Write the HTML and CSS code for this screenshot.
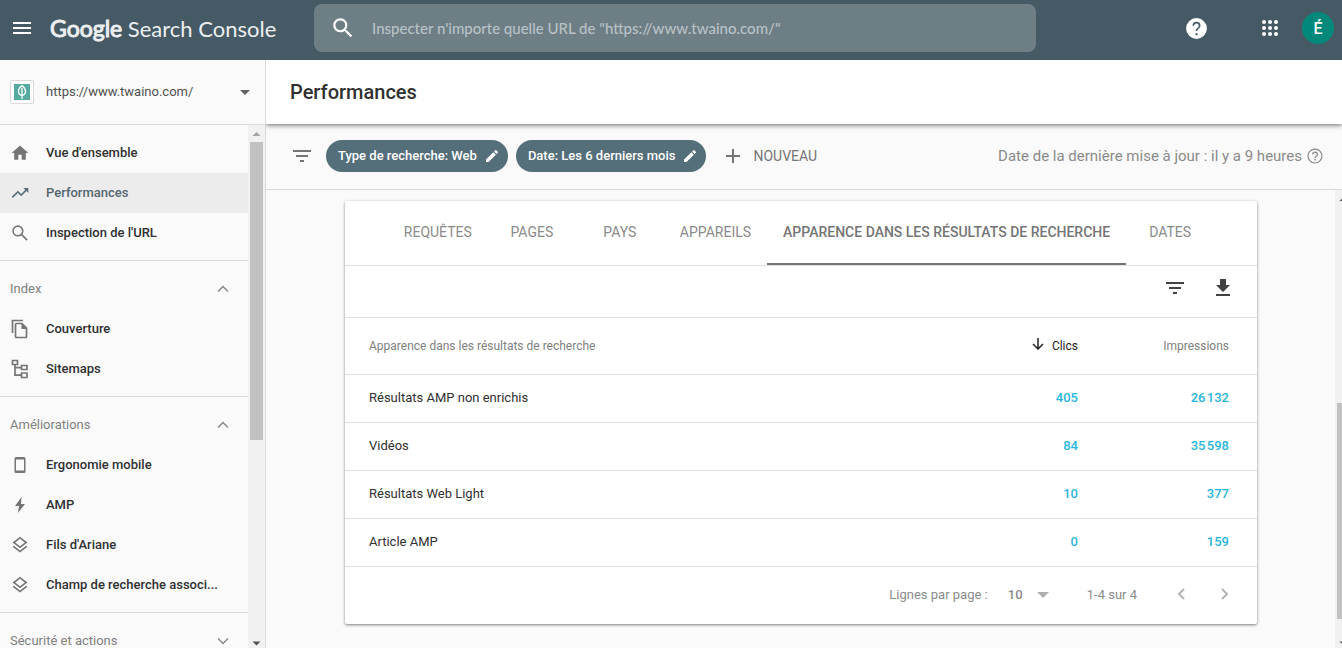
FILE: index.html
```html
<!DOCTYPE html>
<html lang="fr">
<head>
<meta charset="utf-8">
<title>Google Search Console – Performances</title>
<link rel="stylesheet" href="styles.css">
</head>
<body>
<header class="topbar">
  <button class="icon-btn menu-btn" aria-label="Menu principal"><svg width="24" height="24" viewBox="0 0 24 24"><path d="M3 18h18v-2H3v2zm0-5h18v-2H3v2zm0-7v2h18V6H3z"/></svg></button>
  <a class="logo" href="#"><span class="logo-google">Google</span> Search Console</a>
  <form class="search" role="search">
    <svg width="26" height="26" viewBox="0 0 24 24" aria-hidden="true"><path d="M15.5 14h-.79l-.28-.27A6.47 6.47 0 0 0 16 9.5 6.5 6.5 0 1 0 9.5 16c1.61 0 3.09-.59 4.23-1.57l.27.28v.79l5 4.99L20.490 19l-4.990-5zm-6 0a4.500 4.500 0 1 1 0-9 4.500 4.500 0 0 1 0 9z"/></svg>
    <input class="search-input" type="text" aria-label="Inspecter une URL" placeholder="Inspecter n'importe quelle URL de &quot;https://www.twaino.com/&quot;">
  </form>
  <div class="top-actions">
    <button class="icon-btn" aria-label="Aide"><svg width="25" height="25" viewBox="0 0 24 24"><path fill-rule="evenodd" d="M12 2a10 10 0 1 0 0 20 10 10 0 0 0 0-20zm-1 14.500h2v2h-2zM12 5.500A3.800 3.800 0 0 0 8.200 9.300h1.600a2.200 2.200 0 1 1 4.400 0c0 2-3 2.200-3 5.200h1.600c0-2.300 3-2.700 3-5.200A3.800 3.800 0 0 0 12 5.500z"/></svg></button>
    <button class="icon-btn apps-btn" aria-label="Applications"><svg width="24" height="24" viewBox="0 0 24 24"><g><circle cx="6" cy="6" r="2"/><circle cx="12" cy="6" r="2"/><circle cx="18" cy="6" r="2"/><circle cx="6" cy="12" r="2"/><circle cx="12" cy="12" r="2"/><circle cx="18" cy="12" r="2"/><circle cx="6" cy="18" r="2"/><circle cx="12" cy="18" r="2"/><circle cx="18" cy="18" r="2"/></g></svg></button>
    <button class="avatar" aria-label="Compte">É</button>
  </div>
</header>

<div class="body">
  <aside class="sidebar">
    <button class="property">
      <span class="favicon"><svg width="16" height="16" viewBox="0 0 16 16"><rect width="16" height="16" fill="#56ab9f"/><path d="M8 1.500C5.500 3.500 4.500 5.500 4.500 7.500S6 11 8 11.500c2-.5 3.500-2 3.500-4S10.500 3.500 8 1.500zM8 4v11" fill="none" stroke="#fff" stroke-width="1.300"/></svg></span>
      <span class="property-url">https://www.twaino.com/</span>
      <svg class="caret" width="10" height="5" viewBox="0 0 10 5"><path d="M0 0h10L5 5z"/></svg>
    </button>
    <div class="nav-wrap">
      <nav class="nav">
        <section class="nav-section">
          <a class="nav-item" href="#"><svg width="20" height="20" viewBox="0 0 24 24"><path d="M10 20v-6h4v6h5v-8h3L12 3 2 12h3v8z"/></svg><span>Vue d'ensemble</span></a>
          <a class="nav-item active" href="#" aria-current="page"><svg width="20" height="20" viewBox="0 0 24 24"><path d="m16 6 2.290 2.290-4.880 4.880-4-4L2 16.590 3.410 18l6-6 4 4 6.300-6.290L22 12V6z"/></svg><span>Performances</span></a>
          <a class="nav-item" href="#"><svg width="20" height="20" viewBox="0 0 24 24"><path d="M9.500 3.700a5.800 5.800 0 1 1 0 11.600 5.800 5.800 0 0 1 0-11.600zM14 14l6.500 6.500" fill="none" stroke="currentColor" stroke-width="1.900"/></svg><span>Inspection de l'URL</span></a>
        </section>
        <section class="nav-section">
          <button class="nav-head">Index<svg width="12" height="12" viewBox="0 0 12 12"><path d="m1 8.500 5-5 5 5"/></svg></button>
          <a class="nav-item" href="#"><svg width="20" height="20" viewBox="0 0 20 20"><path d="M2.500 14V1.500H13M6.500 4.500h5.500l4.500 4.500v8.500q0 1-1 1h-9q-1 0-1-1v-12q0-1 1-1z" fill="none" stroke="currentColor" stroke-width="1.700"/><path d="M11.500 4v6H17z"/></svg><span>Couverture</span></a>
          <a class="nav-item" href="#"><svg width="20" height="20" viewBox="0 0 20 20"><path d="M2.500 1.500h5v4h-5zM11.500 6.500h5.500v4h-5.500zM11.500 14h5.500v4.500h-5.500zM5 5.500v10.700h6.500M5 8.700h6.500" fill="none" stroke="currentColor" stroke-width="1.700"/></svg><span>Sitemaps</span></a>
        </section>
        <section class="nav-section">
          <button class="nav-head">Améliorations<svg width="12" height="12" viewBox="0 0 12 12"><path d="m1 8.500 5-5 5 5"/></svg></button>
          <a class="nav-item" href="#"><svg width="20" height="20" viewBox="0 0 20 20"><path fill-rule="evenodd" d="M6 2h8q1.500 0 1.500 1.500v13q0 1.500-1.500 1.500H6q-1.500 0-1.500-1.500v-13Q4.500 2 6 2zM6 4.500v11h8v-11z"/></svg><span>Ergonomie mobile</span></a>
          <a class="nav-item" href="#"><svg width="20" height="20" viewBox="0 0 20 20"><path d="M11.500 2 5 11h4l-1 7 7-9h-4z"/></svg><span>AMP</span></a>
          <a class="nav-item" href="#"><svg width="20" height="20" viewBox="0 0 24 24"><path d="m11.990 18.540-7.370-5.730L3 14.070l9 7 9-7-1.630-1.270zM12 16l7.360-5.730L21 9l-9-7-9 7 1.630 1.270zm0-11.470L17.740 9 12 13.470 6.260 9z"/></svg><span>Fils d'Ariane</span></a>
          <a class="nav-item" href="#"><svg width="20" height="20" viewBox="0 0 24 24"><path d="m11.990 18.540-7.370-5.730L3 14.070l9 7 9-7-1.630-1.270zM12 16l7.360-5.730L21 9l-9-7-9 7 1.630 1.270zm0-11.470L17.740 9 12 13.470 6.260 9z"/></svg><span>Champ de recherche associ...</span></a>
        </section>
        <section class="nav-section">
          <button class="nav-head">Sécurité et actions<svg width="12" height="12" viewBox="0 0 12 12"><path d="m1 3.500 5 5 5-5"/></svg></button>
        </section>
      </nav>
      <div class="scrollbar" aria-hidden="true">
        <svg class="arrow faint" width="17" height="17" viewBox="0 0 17 17"><path d="m4.500 11 4-4 4 4z"/></svg>
        <div class="track"><div class="thumb nav-thumb"></div></div>
        <svg class="arrow" width="17" height="17" viewBox="0 0 17 17"><path d="m4.500 10.500 4 4 4-4z"/></svg>
      </div>
    </div>
  </aside>

  <main class="main">
    <div class="titlebar"><h1>Performances</h1></div>
    <div class="filters">
      <svg class="filter-icon" width="24" height="24" viewBox="0 0 24 24" aria-hidden="true"><path d="M10 18h4v-2h-4v2zM3 6v2h18V6H3zm3 7h12v-2H6v2z"/></svg>
      <button class="chip">Type de recherche: Web<svg width="16" height="16" viewBox="0 0 24 24"><path d="M3 17.250V21h3.750L17.810 9.940l-3.750-3.750zM20.710 7.040a1 1 0 0 0 0-1.410l-2.340-2.340a1 1 0 0 0-1.410 0l-1.830 1.830 3.750 3.750z"/></svg></button>
      <button class="chip">Date: Les 6 derniers mois<svg width="16" height="16" viewBox="0 0 24 24"><path d="M3 17.250V21h3.750L17.810 9.940l-3.750-3.750zM20.710 7.040a1 1 0 0 0 0-1.410l-2.340-2.340a1 1 0 0 0-1.410 0l-1.830 1.830 3.750 3.750z"/></svg></button>
      <button class="new-btn"><svg width="14" height="14" viewBox="0 0 14 14"><path d="M6 0h2v6h6v2H8v6H6V8H0V6h6z"/></svg>NOUVEAU</button>
      <p class="updated">Date de la dernière mise à jour : il y a 9 heures<svg width="18" height="18" viewBox="0 0 24 24"><path d="M11 18h2v-2h-2v2zm1-16C6.480 2 2 6.480 2 12s4.480 10 10 10 10-4.480 10-10S17.520 2 12 2zm0 18.500a8.500 8.500 0 1 1 0-17 8.500 8.500 0 0 1 0 17zM12 6a4 4 0 0 0-4 4h1.700a2.300 2.300 0 1 1 4.600 0c0 2-3.200 1.900-3.200 5h1.800c0-2.250 3.100-2.500 3.100-5a4 4 0 0 0-4-4z"/></svg></p>
    </div>
    <div class="content-wrap">
      <div class="content">
        <section class="card">
          <div class="tabs" role="tablist">
            <button class="tab" role="tab">REQUÊTES</button>
            <button class="tab" role="tab">PAGES</button>
            <button class="tab" role="tab">PAYS</button>
            <button class="tab" role="tab">APPAREILS</button>
            <button class="tab selected" role="tab" aria-selected="true">APPARENCE DANS LES RÉSULTATS DE RECHERCHE</button>
            <button class="tab" role="tab">DATES</button>
          </div>
          <div class="toolbar">
            <button class="icon-btn" aria-label="Filtrer les lignes"><svg width="24" height="24" viewBox="0 0 24 24"><path d="M10 18h4v-2h-4v2zM3 6v2h18V6H3zm3 7h12v-2H6v2z"/></svg></button>
            <button class="icon-btn" aria-label="Télécharger"><svg width="24" height="24" viewBox="0 0 24 24"><path d="M19 9h-4V3H9v6H5l7 7zM5 18v2h14v-2z"/></svg></button>
          </div>
          <table class="results">
            <thead>
              <tr><th scope="col">Apparence dans les résultats de recherche</th><th class="num sorted" scope="col"><svg width="12" height="12" viewBox="0 0 12 12"><path d="M6 0v10.500M1 6l5 5 5-5"/></svg>Clics</th><th class="num" scope="col">Impressions</th></tr>
            </thead>
            <tbody>
              <tr><td>Résultats AMP non enrichis</td><td class="num">405</td><td class="num">26&#8202;132</td></tr>
              <tr><td>Vidéos</td><td class="num">84</td><td class="num">35&#8202;598</td></tr>
              <tr><td>Résultats Web Light</td><td class="num">10</td><td class="num">377</td></tr>
              <tr><td>Article AMP</td><td class="num">0</td><td class="num">159</td></tr>
            </tbody>
          </table>
          <div class="pager">
            <label for="rows">Lignes par page :</label>
            <span class="rows"><select id="rows"><option>10</option><option>25</option></select><svg width="12" height="6" viewBox="0 0 12 6"><path d="M0 0h12L6 6z"/></svg></span>
            <span class="range">1-4 sur 4</span>
            <button class="page-btn" aria-label="Page précédente"><svg width="12" height="14" viewBox="0 0 12 14"><path d="M9 1 4 6l5 5"/></svg></button>
            <button class="page-btn" aria-label="Page suivante"><svg width="12" height="14" viewBox="0 0 12 14"><path d="m3 1 5 5-5 5"/></svg></button>
          </div>
        </section>
      </div>
      <div class="page-scroll" aria-hidden="true">
        <div class="scrollbar">
          <svg class="arrow" width="17" height="17" viewBox="0 0 17 17"><path d="m4.500 11 4-4 4 4z"/></svg>
          <div class="track"><div class="thumb page-thumb"></div></div>
          <svg class="arrow" width="17" height="17" viewBox="0 0 17 17"><path d="m4.500 10.500 4 4 4-4z"/></svg>
        </div>
      </div>
    </div>
  </main>
</div>
</body>
</html>
```
FILE: styles.css
```css
* { box-sizing: border-box; }

body {
  margin: 0;
  height: 100vh;
  display: flex;
  flex-direction: column;
  overflow: hidden;
  background: #fafafa;
  color: #303030;
  font: 13px/20px Roboto, sans-serif;
}

button, input, select { font: inherit; color: inherit; }
button { padding: 0; border: 0; background: none; cursor: pointer; }
a { color: inherit; text-decoration: none; }
svg { display: block; flex: none; fill: currentColor; }
h1, p { margin: 0; }

/* Top bar */
.topbar {
  flex: none;
  display: flex;
  align-items: center;
  height: 60px;
  padding: 0 8px 4px 10px;
  background: #455a64;
  color: #fff;
}
.logo {
  width: 264px;
  padding-left: 16px;
  font: 22px/32px Lato, sans-serif;
  color: #eceff1;
  white-space: nowrap;
}
.logo-google { font-size: 23px; -webkit-text-stroke: 1px #eceff1; }
.search {
  flex: 0 1 722px;
  min-width: 0;
  margin-left: 16px;
  height: 48px;
  padding-left: 16px;
  display: flex;
  align-items: center;
  gap: 16px;
  border-radius: 8px;
  background: #6e7e85;
}
.logo, .menu-btn { flex: none; }
.search-input {
  flex: 1;
  min-width: 0;
  padding: 0;
  border: 0;
  outline: 0;
  background: none;
  font: 500 15px/24px Lato, sans-serif;
}
.search-input::placeholder { color: #b8c2c5; opacity: 1; }
.top-actions { margin-left: auto; display: flex; align-items: center; }
.apps-btn { margin: 0 20px 0 49px; }
.avatar {
  width: 32px;
  height: 32px;
  padding-top: 2px;
  border-radius: 50%;
  background: #00897b;
  font-size: 16px;
  font-weight: 500;
}

/* Sidebar */
.body { flex: 1; min-height: 0; display: flex; }
.sidebar {
  flex: none;
  width: 266px;
  display: flex;
  flex-direction: column;
  border-right: 1px solid #dadada;
}
.property {
  flex: none;
  height: 65px;
  padding: 0 15px 0 10px;
  display: flex;
  align-items: center;
  border-bottom: 1px solid #dadada;
  color: #616161;
}
.favicon { padding: 3px; border: 1px solid #dadada; border-radius: 2px; background: #fff; }
.property-url { flex: 1; margin-left: 12px; text-align: left; color: #505050; }
.nav-wrap { flex: 1; min-height: 0; display: flex; overflow: hidden; }
.nav { flex: 1; min-width: 0; }
.nav-section { padding: 8px 0 7px; border-bottom: 1px solid #dadada; }
.nav-item {
  height: 40px;
  padding: 0 10px;
  display: flex;
  align-items: center;
  gap: 16px;
  font-weight: 500;
  white-space: nowrap;
}
.nav-item svg { color: #757575; }
.nav-item.active { background: #ececec; color: #546770; }
.nav-item.active svg { color: #546e7a; }
.nav-head {
  width: 100%;
  height: 40px;
  padding: 0 19px 0 10px;
  display: flex;
  align-items: center;
  justify-content: space-between;
  color: #808080;
}
.nav-head svg { fill: none; stroke: #8a8a8a; stroke-width: 1.5; }

/* Scrollbars */
.scrollbar {
  flex: none;
  width: 17px;
  height: 100%;
  display: flex;
  flex-direction: column;
  background: #f1f1f1;
  color: #505050;
}
.faint { color: #a3a3a3; }
.track { flex: 1; padding: 0 2px; display: flex; flex-direction: column; }
.thumb { background: #c1c1c1; }
.nav-thumb { height: 61%; }
.page-thumb { height: 51%; margin-top: auto; margin-bottom: 12px; }
.page-scroll { flex: none; width: 7px; overflow: hidden; }

/* Main column */
.main { flex: 1; min-width: 0; display: flex; flex-direction: column; }
.titlebar {
  flex: none;
  z-index: 1;
  height: 64px;
  padding-left: 24px;
  display: flex;
  align-items: center;
  background: #fff;
  box-shadow: 0 1px 5px rgba(0, 0, 0, .6);
  clip-path: inset(0 0 -12px 0);
}
h1 { font-size: 20px; line-height: 28px; font-weight: 500; }
.filters {
  flex: none;
  height: 66px;
  padding: 0 18px 1px 24px;
  display: flex;
  align-items: center;
  border-bottom: 1px solid #dadada;
  white-space: nowrap;
  color: #757575;
}
.filter-icon { margin-right: 12px; }
.chip {
  height: 32px;
  margin-right: 8px;
  padding: 0 8px 0 12px;
  display: flex;
  align-items: center;
  gap: 7px;
  border-radius: 16px;
  background: #546e7a;
  color: #fff;
  font-weight: 500;
}
.new-btn {
  margin-left: 12px;
  display: flex;
  align-items: center;
  gap: 13px;
  font-size: 14px;
}
.updated {
  margin-left: auto;
  display: flex;
  align-items: center;
  gap: 4px;
  font-size: 15px;
  color: #8a8a8a;
}
.content-wrap { flex: 1; min-height: 0; display: flex; }
.content { flex: 1; min-width: 0; padding: 11px 78px 0 79px; overflow: hidden; }

/* Results card */
.card {
  border-radius: 2px;
  background: #fff;
  box-shadow: 0 1px 3px rgba(0, 0, 0, .5);
}
.tabs {
  height: 65px;
  display: flex;
  justify-content: center;
  border-bottom: 1px solid #e0e0e0;
}
.tab {
  min-width: 88px;
  padding: 0 16px;
  border-bottom: 2px solid transparent;
  font-size: 14px;
  color: #8a8a8a;
  white-space: nowrap;
}
.tab.selected { border-bottom-color: #757575; color: #757575; font-weight: 500; }
.toolbar {
  height: 52px;
  padding: 0 22px 8px;
  display: flex;
  align-items: center;
  justify-content: flex-end;
  gap: 24px;
  border-bottom: 1px solid #e0e0e0;
  color: #424242;
}
.results { width: 100%; border-collapse: collapse; }
.results tr { border-bottom: 1px solid #e0e0e0; }
.results th { height: 56px; padding: 0; font-size: 12px; font-weight: 400; text-align: left; color: #808080; }
.results td { height: 48px; padding: 0; }
.results tr > :first-child { padding-left: 24px; }
.results .num { width: 151px; text-align: right; }
.results tr > :last-child { width: 179px; padding-right: 28px; }
.results td.num { color: #29b6dc; font-weight: 500; }
.results th.sorted { color: #212121; }
.sorted svg { display: inline-block; margin-right: 8px; fill: none; stroke: currentColor; stroke-width: 1.5; }
.pager {
  height: 57px;
  padding: 0 26px 0;
  display: flex;
  align-items: center;
  justify-content: flex-end;
  color: #8a8a8a;
}
.rows { display: flex; align-items: center; margin: 0 38px 0 20px; }
.rows select {
  width: 29px;
  padding: 0;
  border: 0;
  appearance: none;
  background: none;
  font-weight: 500;
}
.rows svg { color: #b0b0b0; }
.page-btn { margin-left: 32px; }
.page-btn svg { fill: none; stroke: #b5b5b5; stroke-width: 2; }
.range + .page-btn { margin-left: 38px; }
```
